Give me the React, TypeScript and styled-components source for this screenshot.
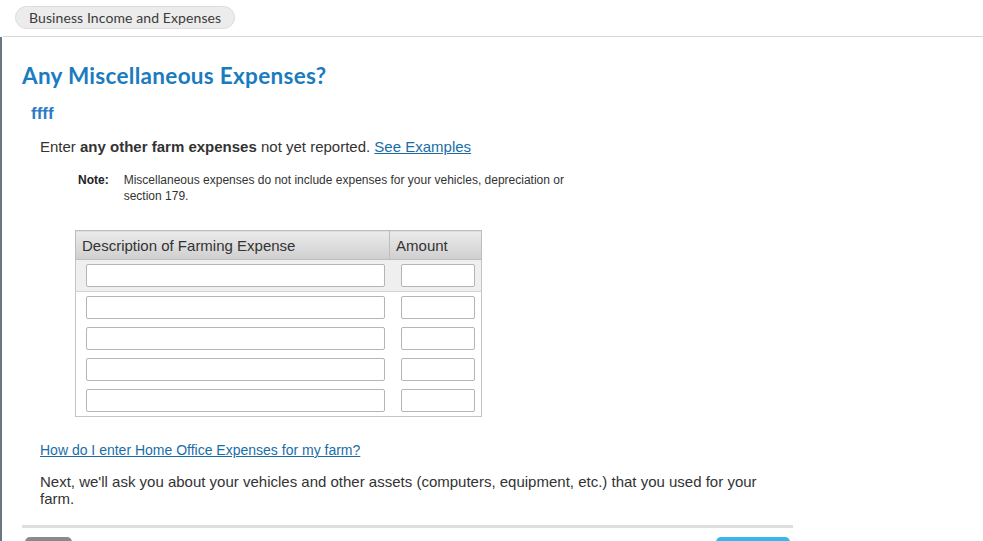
import { createGlobalStyle } from "styled-components";
import styled from "styled-components";

const GlobalStyle = createGlobalStyle`
    html, body {
        margin: 0;
        padding: 0;
        background: #ffffff;
        overflow: hidden;
    }
    body {
        font-family: "Liberation Sans", Arial, sans-serif;
        color: #333333;
    }
`;

const Page = styled.div`
    width: 983px;
    height: 541px;
    display: flex;
    flex-direction: column;
    overflow: hidden;
`;

const TopBar = styled.div`
    flex-shrink: 0;
    height: 37px;
    border-bottom: 1px solid #d6d6d6;
    margin-left: 3px;
    padding: 6px 0 0 12px;
    box-sizing: border-box;
`;

const Crumb = styled.span`
    display: inline-block;
    height: 23px;
    line-height: 22px;
    padding: 0 13px 0 13px;
    border-radius: 12px;
    background: #ececec;
    border: 1px solid #dcdcdc;
    box-sizing: border-box;
    font-family: Lato, "Open Sans", sans-serif;
    font-size: 14px;
    letter-spacing: 0.1px;
    color: #3b3b3b;
`;

const Main = styled.div`
    flex: 1;
    border-left: 2px solid #6b7884;
    padding: 25px 0 0 20px;
`;

const Title = styled.h1`
    margin: 0;
    font-family: Lato, "Open Sans", sans-serif;
    font-weight: 700;
    font-size: 22.5px;
    line-height: 28px;
    letter-spacing: 0.3px;
    color: #1b7bbf;
`;

const SubTitle = styled.h2`
    margin: 14px 0 0 9px;
    font-family: "Liberation Sans", Arial, sans-serif;
    font-weight: 700;
    font-size: 17px;
    line-height: 20px;
    color: #2d7ac6;
`;

const Body = styled.div`
    padding-left: 18px;
    width: 740px;
`;

const Intro = styled.p`
    margin: 14px 0 0 0;
    font-size: 15px;
    line-height: 18px;
    color: #333333;
    b {
        font-weight: 700;
    }
`;

const Link = styled.a`
    color: #1a6ea8;
    text-decoration: underline;
    cursor: pointer;
`;

const Note = styled.div`
    display: flex;
    gap: 15px;
    margin: 16px 0 0 38px;
    width: 505px;
`;

const NoteLabel = styled.span`
    font-size: 12px;
    font-weight: 700;
    line-height: 16px;
    color: #222222;
`;

const NoteText = styled.span`
    font-size: 12px;
    line-height: 16px;
    color: #333333;
`;

const Table = styled.table`
    margin: 26px 0 0 35px;
    width: 407px;
    border-collapse: collapse;
    border: 1px solid #c4c4c4;
`;

const HeadCell = styled.th<{ $w: number }>`
    width: ${(p) => p.$w}px;
    height: 29px;
    padding: 0 6px;
    text-align: left;
    font-weight: 400;
    font-size: 15px;
    color: #333333;
    background: linear-gradient(#ebebeb, #cfcfcf);
    border: 1px solid #bdbdbd;
    box-sizing: border-box;
`;

const Row = styled.tr<{ $shade: boolean }>`
    background: ${(p) => (p.$shade ? "#efefef" : "#ffffff")};
    border-bottom: ${(p) => (p.$shade ? "1px solid #d4d4d4" : "none")};
`;

const Cell = styled.td<{ $first?: boolean }>`
    height: 31px;
    padding: ${(p) => (p.$first ? "4px 0 4px 10px" : "4px 6px 4px 11px")};
    box-sizing: border-box;
`;

const Field = styled.input<{ $w: number }>`
    display: block;
    width: ${(p) => p.$w}px;
    height: 23px;
    box-sizing: border-box;
    border: 1px solid #b5b5b5;
    border-radius: 2px;
    background: #ffffff;
    outline: none;
    font-size: 13px;
`;

const HelpLink = styled(Link)`
    display: block;
    margin-top: 24px;
    font-size: 14px;
    line-height: 18px;
`;

const Next = styled.p`
    margin: 14px 0 0 0;
    font-size: 15px;
    line-height: 17px;
    color: #333333;
`;

const Footer = styled.div`
    margin-top: 18px;
    width: 771px;
    border-top: 3px solid #dedede;
    display: flex;
    justify-content: space-between;
    padding: 9px 3px 0 3px;
    box-sizing: border-box;
`;

const FooterButton = styled.button<{ $primary?: boolean }>`
    width: ${(p) => (p.$primary ? 74 : 47)}px;
    height: 30px;
    border: none;
    border-radius: 5px;
    background: ${(p) => (p.$primary ? "#3ab6ef" : "#8a8a8a")};
`;

const rows = [0, 1, 2, 3, 4];

export default function App() {
    return (
        <Page>
            <GlobalStyle />
            <TopBar>
                <Crumb>Business Income and Expenses</Crumb>
            </TopBar>
            <Main>
                <Title>Any Miscellaneous Expenses?</Title>
                <SubTitle>ffff</SubTitle>
                <Body>
                    <Intro>
                        Enter <b>any other farm expenses</b> not yet reported. <Link>See Examples</Link>
                    </Intro>
                    <Note>
                        <NoteLabel>Note:</NoteLabel>
                        <NoteText>
                            Miscellaneous expenses do not include expenses for your vehicles, depreciation or section 179.
                        </NoteText>
                    </Note>
                    <Table>
                        <thead>
                            <tr>
                                <HeadCell $w={315}>Description of Farming Expense</HeadCell>
                                <HeadCell $w={92}>Amount</HeadCell>
                            </tr>
                        </thead>
                        <tbody>
                            {rows.map((r) => (
                                <Row key={r} $shade={r === 0}>
                                    <Cell $first>
                                        <Field $w={299} />
                                    </Cell>
                                    <Cell>
                                        <Field $w={74} />
                                    </Cell>
                                </Row>
                            ))}
                        </tbody>
                    </Table>
                    <HelpLink>How do I enter Home Office Expenses for my farm?</HelpLink>
                    <Next>
                        Next, we'll ask you about your vehicles and other assets (computers, equipment, etc.) that you used for your farm.
                    </Next>
                </Body>
                <Footer>
                    <FooterButton />
                    <FooterButton $primary />
                </Footer>
            </Main>
        </Page>
    );
}
